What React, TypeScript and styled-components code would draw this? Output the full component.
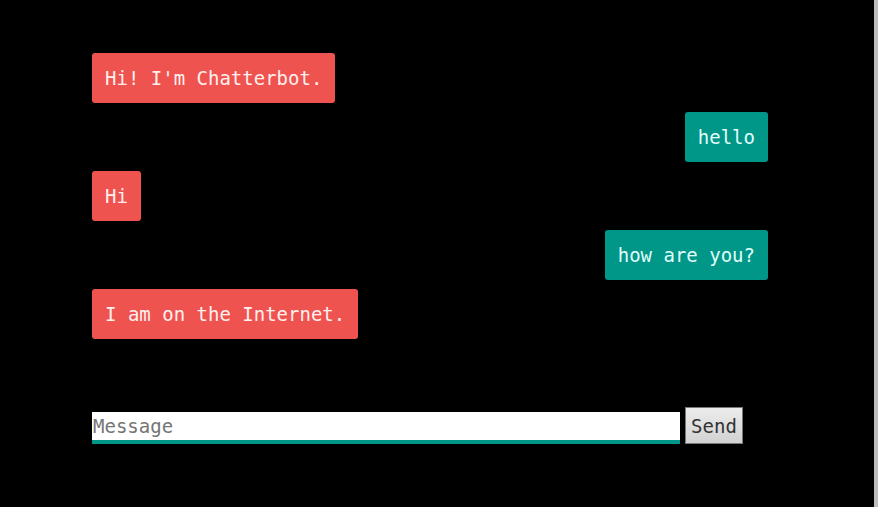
import React, { useState } from "react";
import styled, { createGlobalStyle } from "styled-components";

const GlobalStyle = createGlobalStyle`
  * { box-sizing: border-box; }
  body { margin: 0; background: #000; }
  body, input, button {
    font-family: "DejaVu Sans Mono", monospace;
    font-size: 19px;
    line-height: 24px;
  }
`;

const Page = styled.main`
  min-height: 100vh;
  padding: 53px 106px 40px 92px;
  background: #000;
  border-right: 4px solid #bdbdbd;
`;

const Messages = styled.ul`
  display: flex;
  flex-direction: column;
  gap: 9px;
  margin: 0 0 68px;
  padding: 0;
  list-style: none;
`;

const Bubble = styled.li<{ $mine: boolean }>`
  align-self: ${(p) => (p.$mine ? "flex-end" : "flex-start")};
  padding: 13px;
  border-radius: 3px;
  color: ${(p) => (p.$mine ? "#e0fffb" : "#fff0ee")};
  background: ${(p) => (p.$mine ? "#009688" : "#ef5350")};
`;

const Composer = styled.form`
  display: flex;
  align-items: flex-end;
  gap: 5px;
`;

const MessageInput = styled.input`
  width: 87%;
  height: 32px;
  padding: 2px 1px;
  border: 0;
  border-bottom: 4px solid #009688;
  border-radius: 0;
  outline: none;
  background: #fff;
  color: #222;
  &::placeholder { color: #757575; opacity: 1; }
`;

const SendButton = styled.button`
  height: 37px;
  padding: 4px 5px;
  border: 1px solid #777;
  border-radius: 0;
  background: linear-gradient(#ececec, #d2d2d2);
  color: #333;
`;

const initial = [
  { mine: false, text: "Hi! I'm Chatterbot." },
  { mine: true, text: "hello" },
  { mine: false, text: "Hi" },
  { mine: true, text: "how are you?" },
  { mine: false, text: "I am on the Internet." },
];

export default function App() {
  const [messages, setMessages] = useState(initial);
  const [draft, setDraft] = useState("");

  const send = (event: React.FormEvent) => {
    event.preventDefault();
    if (!draft.trim()) return;
    setMessages([...messages, { mine: true, text: draft }]);
    setDraft("");
  };

  return (
    <>
      <GlobalStyle />
      <Page>
        <Messages>
          {messages.map((message, index) => (
            <Bubble key={index} $mine={message.mine}>{message.text}</Bubble>
          ))}
        </Messages>
        <Composer onSubmit={send}>
          <MessageInput
            type="text"
            aria-label="Message"
            placeholder="Message"
            value={draft}
            onChange={(event) => setDraft(event.target.value)}
          />
          <SendButton type="submit">Send</SendButton>
        </Composer>
      </Page>
    </>
  );
}
